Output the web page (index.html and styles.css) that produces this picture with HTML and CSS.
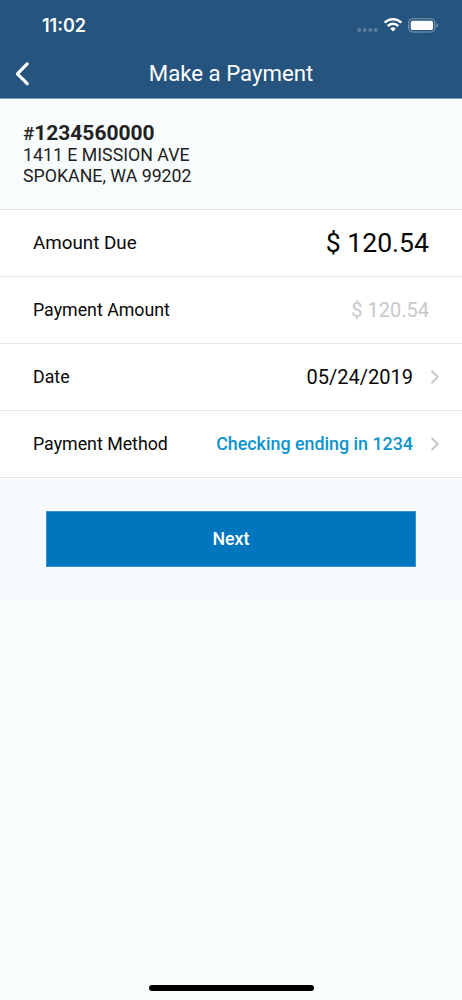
FILE: index.html
```html
<!DOCTYPE html>
<html lang="en">
<head>
<meta charset="utf-8">
<title>Make a Payment</title>
<link rel="stylesheet" href="styles.css">
</head>
<body>
<div class="screen">
  <header class="header">
    <div class="status">
      <span class="time">11:02</span>
      <div class="indicators">
        <svg class="signal" width="22" height="6" viewBox="0 0 22 6"><circle cx="2.2" cy="3" r="2"/><circle cx="7.7" cy="3" r="2"/><circle cx="13.2" cy="3" r="2"/><circle cx="18.7" cy="3" r="2"/></svg>
        <svg class="wifi" width="20" height="15" viewBox="0 0 20 15"><path d="M1.7 5.7a11.6 11.6 0 0 1 16.6 0M4.8 9a7.3 7.3 0 0 1 10.4 0" fill="none" stroke="#fff" stroke-width="2.5"/><path d="M10 14.5 7.2 11.7a4 4 0 0 1 5.6 0Z" fill="#fff"/></svg>
        <svg class="battery" width="31" height="16" viewBox="0 0 31 16"><rect x=".8" y="1.8" width="26" height="13.2" rx="4" fill="none" stroke="#7c98b2" stroke-width="1.1"/><rect x="2.7" y="3.7" width="22.4" height="9.4" rx="2.2" fill="#fff"/><path d="M28.4 6.1c2 .9 2 3.8 0 4.7Z" fill="#7c98b2"/></svg>
      </div>
    </div>
    <div class="nav">
      <svg class="back" width="16" height="26" viewBox="0 0 16 26"><path d="M13.2 2.9 3.4 12.8l9.8 9.9" fill="none" stroke="#fff" stroke-width="3.2" stroke-linecap="round" stroke-linejoin="round"/></svg>
      <h1 class="title">Make a Payment</h1>
    </div>
  </header>
  <section class="account">
    <div class="number"><span class="hash">#</span>1234560000</div>
    <div class="address">1411 E MISSION AVE<br>SPOKANE, WA 99202</div>
  </section>
  <section class="rows">
    <div class="row"><span class="label due-label">Amount Due</span><span class="value due">$ 120.54</span></div>
    <div class="row"><span class="label">Payment Amount</span><span class="value amount">$ 120.54</span></div>
    <div class="row linked"><span class="label">Date</span><span class="value date">05/24/2019</span><svg class="chevron" width="10" height="16" viewBox="0 0 10 16"><path d="m1.4 1.8 6.3 6.2-6.3 6.2"/></svg></div>
    <div class="row linked"><span class="label">Payment Method</span><span class="value method">Checking ending in 1234</span><svg class="chevron" width="10" height="16" viewBox="0 0 10 16"><path d="m1.4 1.8 6.3 6.2-6.3 6.2"/></svg></div>
  </section>
  <div class="actions"><button class="next">Next</button></div>
  <div class="home"></div>
</div>
</body>
</html>
```
FILE: styles.css
```css
* { box-sizing: border-box; }
body { margin: 0; font-family: Roboto, "Liberation Sans", sans-serif; color: #080808; }
.screen { width: 462px; height: 1000px; display: flex; flex-direction: column; background: #f8fcfd; overflow: hidden; }
.header { height: 99px; flex: none; background: #25547e; border-bottom: 1px solid #7f9ab3; color: #fff; }
.status { height: 50px; display: flex; justify-content: space-between; padding: 0 23px 0 42px; }
.time { font: 600 18px/22px Inter, sans-serif; padding-top: 15px; }
.indicators { display: flex; align-items: flex-start; padding-top: 17px; }
.signal { fill: #5c7f9f; margin: 10px 4px 0 0; }
.battery { margin-left: 5px; }
.nav { height: 48px; display: grid; grid-template-columns: 36px 1fr 36px; align-items: center; }
.back { margin-left: 14px; }
.title { margin: 0; padding-bottom: 2px; text-align: center; font-size: 22.2px; line-height: 28px; font-weight: 400; }
.account { height: 110px; flex: none; padding: 23px 23px 0; color: #222; }
.number { font-size: 21px; line-height: 22px; font-weight: 700; }
.hash { font-weight: 500; font-size: 18.5px; }
.address { font-size: 17.75px; line-height: 20.5px; }
.rows { border-top: 1px solid #e3e6e8; background: #fff; }
.row { height: 67px; display: flex; align-items: center; padding: 0 33px; border-bottom: 1px solid #e5e6e8; }
.linked { padding-right: 22px; }
.label { font-size: 17.8px; flex: 1; padding-bottom: 2px; }
.due-label { font-size: 18.8px; padding-bottom: 0; }
.due { font-size: 26.6px; padding-bottom: 2px; }
.amount { font-size: 20px; color: #c8c8cc; }
.date { font-size: 20px; }
.method { font-size: 17.85px; font-weight: 500; padding-bottom: 2px; color: #0c93ce; }
.chevron { margin-left: 17px; fill: none; stroke: #c7c7cc; stroke-width: 2; }
.actions { height: 122px; flex: none; padding: 33px 46px 0; background: #f7fbfe; }
.next { display: block; width: 370px; height: 56px; border: 1px solid #3592cd; border-radius: 0; background: #0076bf; color: #fff; font: 500 17.8px/54px Roboto, sans-serif; padding: 0 0 1px; }
.home { width: 165px; height: 6px; border-radius: 3px; background: #000; margin: auto auto 9px; }
```
